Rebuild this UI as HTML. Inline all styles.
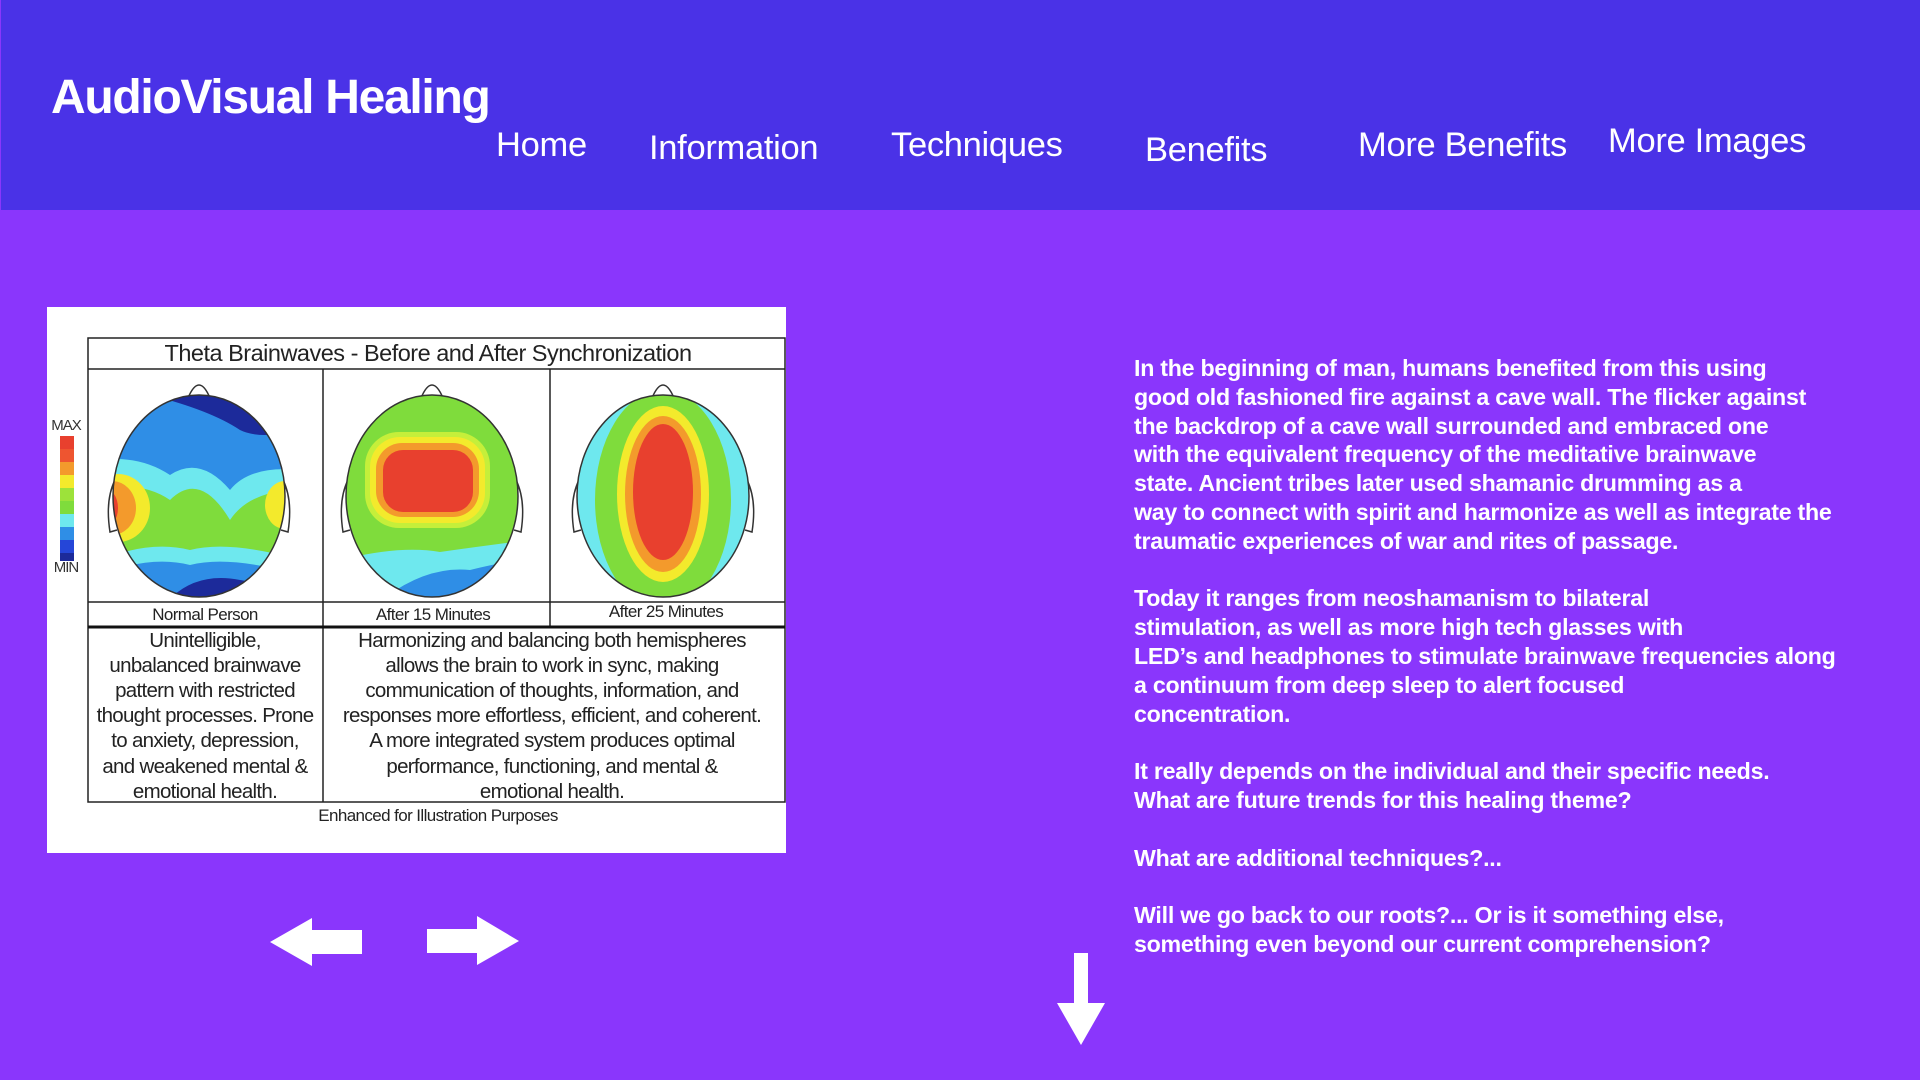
<!DOCTYPE html>
<html><head><meta charset="utf-8"><style>
html,body{margin:0;padding:0;width:1920px;height:1080px;overflow:hidden;background:#8a36fc;font-family:"Liberation Sans",sans-serif;}
.hdr{position:absolute;left:0;top:0;width:1920px;height:210px;background:#4a32e7;border-left:1px solid #8a36fc;box-sizing:border-box;}
.title{position:absolute;left:50px;top:70px;font-size:48px;font-weight:bold;color:#fff;letter-spacing:-1.3px;white-space:nowrap;}
.nav{position:absolute;color:#fff;font-size:34.5px;white-space:nowrap;letter-spacing:-0.3px;}
.txt{position:absolute;left:1134px;top:354px;color:#fff;font-weight:bold;font-size:23.2px;line-height:28.8px;letter-spacing:-0.25px;white-space:nowrap;}
.txt p{margin:0 0 28.8px 0;}
svg{position:absolute;left:0;top:0;}
</style></head><body>
<div class="hdr">
<div class="title">AudioVisual Healing</div>
<div class="nav" style="left:495px;top:126px">Home</div>
<div class="nav" style="left:648px;top:129px">Information</div>
<div class="nav" style="left:890px;top:126px">Techniques</div>
<div class="nav" style="left:1144px;top:131px">Benefits</div>
<div class="nav" style="left:1357px;top:126px">More Benefits</div>
<div class="nav" style="left:1607px;top:122px">More Images</div>
</div>

<svg width="1920" height="1080" viewBox="0 0 1920 1080">
<defs>
<clipPath id="h1"><ellipse cx="199" cy="496" rx="86" ry="101"/></clipPath>
<clipPath id="h2"><ellipse cx="432" cy="496" rx="86" ry="101"/></clipPath>
<clipPath id="h3"><ellipse cx="663" cy="496" rx="86" ry="101"/></clipPath>
</defs>
<rect x="47" y="307" width="739" height="546" fill="#fff"/>
<g stroke="#222" fill="none" stroke-width="1.5">
<rect x="88" y="338" width="697" height="464"/>
<line x1="88" y1="369" x2="785" y2="369"/>
<line x1="88" y1="602" x2="785" y2="602"/>
<line x1="323" y1="369" x2="323" y2="802"/>
<line x1="550" y1="369" x2="550" y2="627"/>
</g>
<line x1="88" y1="627" x2="785" y2="627" stroke="#111" stroke-width="3"/>
<text x="428" y="361" font-size="23.5" text-anchor="middle" fill="#222" letter-spacing="-0.5">Theta Brainwaves - Before and After Synchronization</text>
<text x="66" y="430" font-size="15" text-anchor="middle" fill="#333" letter-spacing="-1">MAX</text>
<text x="66" y="572" font-size="15" text-anchor="middle" fill="#333" letter-spacing="-1">MIN</text>
<rect x="60" y="436" width="14" height="13" fill="#e8402e"/>
<rect x="60" y="449" width="14" height="13" fill="#ee5530"/>
<rect x="60" y="462" width="14" height="13" fill="#f39a2c"/>
<rect x="60" y="475" width="14" height="13" fill="#f3ea2c"/>
<rect x="60" y="488" width="14" height="13" fill="#9de23a"/>
<rect x="60" y="501" width="14" height="13" fill="#7fdc3c"/>
<rect x="60" y="514" width="14" height="13" fill="#6ee8ee"/>
<rect x="60" y="527" width="14" height="13" fill="#2f8ee6"/>
<rect x="60" y="540" width="14" height="13" fill="#2546d8"/>
<rect x="60" y="553" width="14" height="8" fill="#1c2a9a"/>
<g fill="#fff" stroke="#333" stroke-width="1.5">
<path d="M188 398 Q199 372 210 398"/><path d="M421 398 Q432 372 443 398"/><path d="M652 398 Q663 372 674 398"/>
<path d="M115 480 Q105 500 110 532 L117 530"/><path d="M283 480 Q293 500 288 532 L281 530"/>
<path d="M348 480 Q338 500 343 532 L350 530"/><path d="M516 480 Q526 500 521 532 L514 530"/>
<path d="M579 480 Q569 500 574 532 L581 530"/><path d="M747 480 Q757 500 752 532 L745 530"/>
</g>
<g clip-path="url(#h1)">
<rect x="100" y="390" width="200" height="220" fill="#7fdc3c"/>
<path d="M100 390 H300 V490 Q250 490 230 520 Q200 470 170 500 Q140 480 100 490Z" fill="#6ee8ee"/>
<path d="M100 390 H300 V470 Q250 465 230 490 Q200 455 170 475 Q140 455 100 460Z" fill="#2f8ee6"/>
<path d="M150 390 H300 V430 Q260 440 240 430 Q210 410 150 395Z" fill="#1c2a9a"/>
<path d="M100 560 Q150 540 190 550 Q230 540 300 560 V610 H100Z" fill="#6ee8ee"/>
<path d="M100 575 Q150 555 190 565 Q230 555 300 575 V610 H100Z" fill="#2f8ee6"/>
<path d="M160 610 Q190 570 240 580 L300 590 V610Z" fill="#1c2a9a"/>
<ellipse cx="118" cy="508" rx="32" ry="34" fill="#f3ea2c"/>
<ellipse cx="112" cy="508" rx="24" ry="27" fill="#f39a2c"/>
<ellipse cx="104" cy="508" rx="14" ry="20" fill="#e8402e"/>
<ellipse cx="285" cy="505" rx="20" ry="24" fill="#f3ea2c"/>
</g>
<ellipse cx="199" cy="496" rx="86" ry="101" fill="none" stroke="#333" stroke-width="1.5"/>
<g clip-path="url(#h2)">
<rect x="340" y="390" width="200" height="220" fill="#7fdc3c"/>
<path d="M340 560 Q400 545 440 552 Q490 545 530 540 V610 H340Z" fill="#6ee8ee"/>
<path d="M370 610 Q420 565 470 570 Q510 560 530 560 V610Z" fill="#2f8ee6"/>
<path d="M470 610 Q490 580 530 575 V610Z" fill="#2546d8"/>
<rect x="365" y="432" width="125" height="96" rx="34" fill="#c5ef3a"/>
<rect x="370" y="437" width="115" height="86" rx="30" fill="#f3ea2c"/>
<rect x="376" y="443" width="103" height="74" rx="26" fill="#f39a2c"/>
<rect x="383" y="450" width="90" height="62" rx="20" fill="#e8402e"/>
</g>
<ellipse cx="432" cy="496" rx="86" ry="101" fill="none" stroke="#333" stroke-width="1.5"/>
<g clip-path="url(#h3)">
<rect x="570" y="390" width="190" height="220" fill="#6ee8ee"/>
<ellipse cx="663" cy="500" rx="68" ry="110" fill="#7fdc3c"/>
<ellipse cx="663" cy="494" rx="46" ry="88" fill="#f3ea2c"/>
<ellipse cx="663" cy="494" rx="38" ry="78" fill="#f39a2c"/>
<ellipse cx="663" cy="492" rx="30" ry="68" fill="#e8402e"/>
</g>
<ellipse cx="663" cy="496" rx="86" ry="101" fill="none" stroke="#333" stroke-width="1.5"/>
<g font-size="17" text-anchor="middle" fill="#222" letter-spacing="-0.6">
<text x="205" y="620">Normal Person</text>
<text x="433" y="620">After 15 Minutes</text>
<text x="666" y="617">After 25 Minutes</text>
</g>
<g font-size="20.5" text-anchor="middle" fill="#222" letter-spacing="-0.7">
<text x="205" y="647">Unintelligible,</text>
<text x="205" y="672">unbalanced brainwave</text>
<text x="205" y="697">pattern with restricted</text>
<text x="205" y="722">thought processes. Prone</text>
<text x="205" y="747">to anxiety, depression,</text>
<text x="205" y="773">and weakened mental &amp;</text>
<text x="205" y="798">emotional health.</text>
<text x="552" y="647">Harmonizing and balancing both hemispheres</text>
<text x="552" y="672">allows the brain to work in sync, making</text>
<text x="552" y="697">communication of thoughts, information, and</text>
<text x="552" y="722">responses more effortless, efficient, and coherent.</text>
<text x="552" y="747">A more integrated system produces optimal</text>
<text x="552" y="773">performance, functioning, and mental &amp;</text>
<text x="552" y="798">emotional health.</text>
</g>
<text x="438" y="821" font-size="17" text-anchor="middle" fill="#222" letter-spacing="-0.6">Enhanced for Illustration Purposes</text>
<g fill="#fff">
<path d="M270 942 L312 918 L312 930 L362 930 L362 954 L312 954 L312 966Z"/>
<path d="M519 941 L477 916 L477 929 L427 929 L427 953 L477 953 L477 965Z"/>
<path d="M1074 953 H1088 V1003 H1105 L1081 1045 L1057 1003 H1074Z"/>
</g>
</svg>

<div class="txt">
<p>In the beginning of man, humans benefited from this using<br>good old fashioned fire against a cave wall. The flicker against<br>the backdrop of a cave wall surrounded and embraced one<br>with the equivalent frequency of the meditative brainwave<br>state. Ancient tribes later used shamanic drumming as a<br>way to connect with spirit and harmonize as well as integrate the<br>traumatic experiences of war and rites of passage.</p>
<p>Today it ranges from neoshamanism to bilateral<br>stimulation, as well as more high tech glasses with<br>LED’s and headphones to stimulate brainwave frequencies along<br>a continuum from deep sleep to alert focused<br>concentration.</p>
<p>It really depends on the individual and their specific needs.<br>What are future trends for this healing theme?</p>
<p>What are additional techniques?...</p>
<p>Will we go back to our roots?... Or is it something else,<br>something even beyond our current comprehension?</p>
</div>
</body></html>
